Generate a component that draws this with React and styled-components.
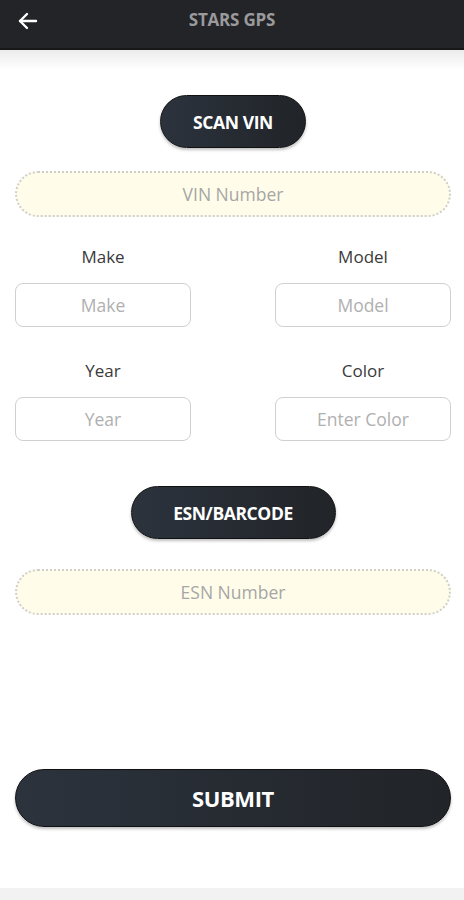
import React from 'react';
import styled, { createGlobalStyle } from 'styled-components';

const GlobalStyle = createGlobalStyle`
  html, body {
    margin: 0;
    padding: 0;
    background: #ffffff;
    font-family: 'Open Sans', 'Noto Sans', sans-serif;
  }
`;

const Screen = styled.div`
  display: flex;
  flex-direction: column;
  height: 900px;
  width: 464px;
  overflow: hidden;
`;

const Header = styled.header`
  align-items: center;
  background: #222427;
  border-bottom: 2px solid #17181a;
  box-sizing: border-box;
  display: flex;
  height: 50px;
  justify-content: center;
  position: relative;
  flex-shrink: 0;
`;

const BackButton = styled.button`
  background: none;
  border: none;
  display: flex;
  left: 16px;
  padding: 0;
  position: absolute;
  top: 9px;
`;

const Title = styled.h1`
  color: #9a9a9c;
  font-size: 17px;
  font-weight: 700;
  letter-spacing: -0.2px;
  margin: 0;
  margin-top: -10px;
`;

const Shade = styled.div`
  background: linear-gradient(#ececec, #ffffff);
  height: 20px;
  flex-shrink: 0;
`;

const Content = styled.main`
  display: flex;
  flex: 1;
  flex-direction: column;
  padding: 25px 13px 0 15px;
`;

const PillButton = styled.button`
  align-self: center;
  background: linear-gradient(90deg, #2c333d, #212428);
  border: 1px solid #111;
  border-radius: 30px;
  box-shadow: 0 2px 3px rgba(0, 0, 0, 0.25);
  color: #ffffff;
  font-family: 'Open Sans', sans-serif;
  font-size: ${({ $big }) => ($big ? '22px' : '17.5px')};
  font-weight: 700;
  height: ${({ $big }) => ($big ? '58px' : '53px')};
  letter-spacing: -0.4px;
  width: ${({ $width }) => $width};
`;

const DottedField = styled.input`
  background: #fffde9;
  border: 2px dotted #cfcfcf;
  border-radius: 24px;
  box-sizing: border-box;
  color: #333;
  font-family: 'Open Sans', sans-serif;
  font-size: 17.5px;
  height: 46px;
  margin-top: ${({ $top }) => $top};
  text-align: center;
  width: 100%;
  &::placeholder {
    color: #a6a6a6;
  }
`;

const Grid = styled.div`
  display: grid;
  grid-template-columns: 176px 176px;
  justify-content: space-between;
  margin-top: 29px;
  row-gap: 33px;
`;

const Field = styled.label`
  align-items: center;
  display: flex;
  flex-direction: column;
`;

const Label = styled.span`
  color: #3a3a3a;
  font-size: 17px;
  line-height: 22px;
  margin-bottom: 15px;
`;

const Box = styled.input`
  background: #fff;
  border: 1.5px solid #d0d0d0;
  border-radius: 8px;
  box-sizing: border-box;
  font-family: 'Open Sans', sans-serif;
  font-size: 17.5px;
  height: 44px;
  text-align: center;
  width: 100%;
  &::placeholder {
    color: #b0b0b0;
  }
`;

const Spacer = styled.div`
  height: ${({ $h }) => $h};
  flex-shrink: 0;
`;

const BottomBar = styled.div`
  background: #f2f2f2;
  height: 12px;
  flex-shrink: 0;
`;

const fields = [
  { label: 'Make', placeholder: 'Make' },
  { label: 'Model', placeholder: 'Model' },
  { label: 'Year', placeholder: 'Year' },
  { label: 'Color', placeholder: 'Enter Color' },
];

export default function App() {
  return (
    <Screen>
      <GlobalStyle />
      <Header>
        <BackButton aria-label="Back">
          <svg width="24" height="24" viewBox="0 0 24 24" fill="none" stroke="#ffffff" strokeWidth="2.4" strokeLinecap="round" strokeLinejoin="round">
            <path d="M20 12H4" />
            <path d="M11 5l-7 7 7 7" />
          </svg>
        </BackButton>
        <Title>STARS GPS</Title>
      </Header>
      <Shade />
      <Content>
        <PillButton $width="146px">SCAN VIN</PillButton>
        <DottedField $top="23px" placeholder="VIN Number" />
        <Grid>
          {fields.map(({ label, placeholder }) => (
            <Field key={label}>
              <Label>{label}</Label>
              <Box placeholder={placeholder} />
            </Field>
          ))}
        </Grid>
        <Spacer $h="45px" />
        <PillButton $width="205px">ESN/BARCODE</PillButton>
        <DottedField $top="30px" placeholder="ESN Number" />
        <Spacer $h="154px" />
        <PillButton $big $width="100%">SUBMIT</PillButton>
      </Content>
      <BottomBar />
    </Screen>
  );
}
